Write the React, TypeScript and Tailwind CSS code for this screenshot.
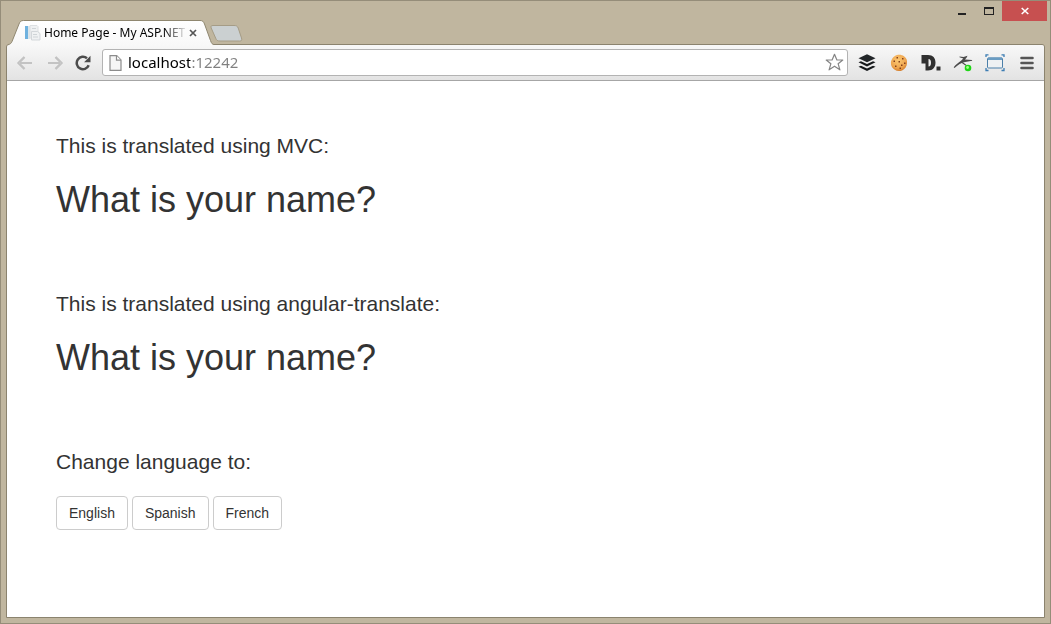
import type { ReactNode } from "react";

function ToolButton({ label, children }: { label: string; children: ReactNode }) {
  return (
    <button type="button" aria-label={label} className="flex h-6 w-8 shrink-0 items-center justify-center">
      {children}
    </button>
  );
}

function PageIcon() {
  return (
    <svg width="16" height="16" viewBox="0 0 16 16" className="shrink-0" aria-hidden="true">
      <rect x="0" y="1" width="3" height="13" fill="#6fb2df" />
      <rect x="3" y="1" width="2" height="13" fill="#dbe6ec" />
      <path d="M5 .5h7l1 1V13H5z" fill="#eff1f2" stroke="#dde0e2" />
      <path d="M6.500 6.500h6l2.500 2v6.500h-8.500z" fill="#f0f2f3" stroke="#d3d7da" />
      <path d="M7 3.500h4M8 9.500h4M8 12h5" stroke="#cfd4d7" />
    </svg>
  );
}

function Tab() {
  return (
    <div className="relative z-10 -mb-px ml-[2px] flex h-[25px] w-[206px] items-center pl-[17px]">
      <svg width="206" height="25" viewBox="0 0 206 25" className="absolute inset-0" aria-hidden="true">
        <defs>
          <linearGradient id="tabFill" x1="0" y1="0" x2="0" y2="1">
            <stop offset="0" stopColor="#ffffff" />
            <stop offset="1" stopColor="#f8f8f8" />
          </linearGradient>
        </defs>
        <path
          d="M0 25V24.500C2 24.500 3 23.500 4 21.500L11 4C12 1.500 13 .5 15.500 .5H192C194.500 .5 195.500 1.500 196.500 4L202.500 20.500C203.500 23.500 204.500 24.500 206 24.500V25z"
          fill="url(#tabFill)"
        />
        <path
          d="M0 24.500C2 24.500 3 23.500 4 21.500L11 4C12 1.500 13 .5 15.500 .5H192C194.500 .5 195.500 1.500 196.500 4L202.500 20.500C203.500 23.500 204.500 24.500 206 24.500"
          fill="none"
          stroke="#8f8770"
        />
      </svg>
      <div className="relative flex items-center">
        <PageIcon />
        <span className="ml-[3px] w-[142px] whitespace-nowrap font-['Noto_Sans','Open_Sans',sans-serif] text-[12px] leading-4 text-black [mask-image:linear-gradient(to_right,black_120px,transparent_144px)]">
          Home Page - My ASP.NET
        </span>
        <button type="button" aria-label="Close tab" className="ml-[2px] flex h-4 w-[10px] items-center justify-center">
          <svg width="8" height="8" viewBox="0 0 8 8" aria-hidden="true">
            <path d="M1 1l6 6M7 1L1 7" stroke="#555" strokeWidth="1.700" />
          </svg>
        </button>
      </div>
    </div>
  );
}

function TitleBar() {
  return (
    <header className="flex h-[43px] items-end justify-between pl-[5px]">
      <div className="flex items-end">
        <Tab />
        <button type="button" aria-label="New tab" className="mb-[2px] -ml-[4px]">
          <svg width="33" height="17" viewBox="0 0 33 17" aria-hidden="true">
            <path
              d="M3 .5H24C26.500 .5 27.500 1.200 28.200 3L31.500 13C32.200 15.300 31.500 16 29.500 16H10C7.500 16 6.500 15.300 5.700 13.200L1.200 3C.6 1.300 1 .5 3 .5z"
              fill="#cbd0d1"
              stroke="#a59c86"
            />
          </svg>
        </button>
      </div>
      <div className="mr-[3px] flex self-start">
        <button type="button" aria-label="Minimize" className="flex h-5 w-[27px] items-center justify-center">
          <svg width="10" height="10" viewBox="0 0 10 10" aria-hidden="true">
            <path d="M1 7h8v2H1z" fill="#222" />
          </svg>
        </button>
        <button type="button" aria-label="Maximize" className="flex h-5 w-[27px] items-center justify-center">
          <svg width="10" height="8" viewBox="0 0 10 8" aria-hidden="true">
            <path d="M0 0h10v8H0zM1 2v5h8V2z" fill="#222" fillRule="evenodd" />
          </svg>
        </button>
        <button type="button" aria-label="Close" className="flex h-5 w-[45px] items-center justify-center bg-[#c75050]">
          <svg width="8" height="8" viewBox="0 0 8 8" aria-hidden="true">
            <path d="M.7 1l6.600 6M7.300 1L.7 7" stroke="#fff" strokeWidth="1.600" />
          </svg>
        </button>
      </div>
    </header>
  );
}

function ArrowIcon({ flip }: { flip?: boolean }) {
  return (
    <svg width="16" height="14" viewBox="0 0 16 14" className={flip ? "-scale-x-100" : ""} aria-hidden="true">
      <path d="M7.500 1L1.500 7l6 6M2 7H15" fill="none" stroke="#b8b8b8" strokeWidth="2.200" />
      <path d="M7.500 1L1.500 7l6 6M2 7H15" fill="none" stroke="#cecece" strokeWidth="1" />
    </svg>
  );
}

function Toolbar() {
  return (
    <div className="flex items-center rounded-t-[2px] border-b border-[#a6a6a6] bg-linear-to-b from-[#f8f8f8] to-[#e3e3e3] py-1 pr-px pl-[3px]">
      <button type="button" aria-label="Back" className="flex h-6 w-[30px] shrink-0 items-center justify-center">
        <ArrowIcon />
      </button>
      <button type="button" aria-label="Forward" className="flex h-6 w-[30px] shrink-0 items-center justify-center">
        <ArrowIcon flip />
      </button>
      <button type="button" aria-label="Reload" className="flex h-6 w-[26px] shrink-0 items-center justify-center">
        <svg width="16" height="16" viewBox="0 0 16 16" aria-hidden="true">
          <path d="M13.700 10.300A6.200 6.200 0 1 1 12 3.300" fill="none" stroke="#4c4c4c" strokeWidth="2.500" />
          <path d="M15.500 .8V7.200H9.100z" fill="#4c4c4c" />
        </svg>
      </button>
      <div className="ml-[6px] flex h-[27px] min-w-0 flex-1 items-center rounded-[3px] border border-[#b3b3b3] bg-white pr-[3px] pl-[6px]">
        <svg width="13" height="16" viewBox="0 0 13 16" className="shrink-0" aria-hidden="true">
          <path d="M1 .7h6.700L12 5v10.300H1z" fill="#f6f6f6" stroke="#8c8c8c" strokeWidth="1.200" />
          <path d="M7.500 .7V5.200H12" fill="#fff" stroke="#8c8c8c" strokeWidth="1.200" />
        </svg>
        <input
          type="text"
          aria-label="Address"
          defaultValue="localhost:12242"
          className="ml-[6px] h-6 min-w-0 flex-1 bg-[linear-gradient(to_right,#000_62px,#808080_62px)] bg-clip-text pb-[2px] font-['Noto_Sans','Open_Sans',sans-serif] text-[15px] text-transparent caret-black outline-none"
        />
        <button type="button" aria-label="Bookmark this page" className="shrink-0">
          <svg width="19" height="19" viewBox="0 0 19 19" aria-hidden="true">
            <path
              d="M9.500 1.300L11.900 7h5.900l-4.700 3.700 1.800 6.100-5.400-3.600-5.400 3.600 1.800-6.100L1.200 7h5.900z"
              fill="#fff"
              stroke="#858585"
              strokeWidth="1.200"
              strokeLinejoin="round"
            />
          </svg>
        </button>
      </div>
      <div className="ml-[3px] flex">
        <ToolButton label="Buffer">
          <svg width="18" height="18" viewBox="0 0 18 18" aria-hidden="true">
            <path d="M9 .3L17.500 4.300 9 8.300 .5 4.300z" fill="#222629" />
            <path d="M.5 8.300L3 7.200 9 10 15 7.200 17.500 8.300 9 12.400z" fill="#16191b" />
            <path d="M.5 12.800L3 11.700 9 14.500 15 11.700 17.500 12.800 9 17z" fill="#16191b" />
          </svg>
        </ToolButton>
        <ToolButton label="Cookies">
          <svg width="18" height="18" viewBox="0 0 18 18" aria-hidden="true">
            <defs>
              <radialGradient id="cookie" cx=".45" cy=".35" r=".65">
                <stop offset="0" stopColor="#fbc873" />
                <stop offset=".7" stopColor="#efa64f" />
                <stop offset="1" stopColor="#d5802f" />
              </radialGradient>
            </defs>
            <path
              d="M7 1C9 .4 12 .6 14 2.300 16.500 4 17.300 6.500 17 9.500c-.2 3-2 5.300-4.500 6.700-2.500 1.200-5.500 1.200-7.700-.4C2.500 14.300 .8 12 .9 9 1 5.500 3.500 2 7 1z"
              fill="url(#cookie)"
            />
            <path
              d="M6.500 3H8v1.500H6.500zM12 4h1.500v1.500H12zM3.500 6.500H5V8H3.500zM8.500 7H10v1.500H8.500zM14 8.500h1.500V10H14zM5 11.500h1.500V13H5zM9.500 13.500H11V15H9.500zM11 10.500h1.500V12H11z"
              fill="#84401c"
            />
          </svg>
        </ToolButton>
        <ToolButton label="Disconnect">
          <svg width="20" height="18" viewBox="0 0 20 18" aria-hidden="true">
            <path
              d="M.5 1H7C12 1 14.500 4 14.500 8.500S12 16.500 7 16.500H4.500V9.500H.5zM7.500 5V12.500C9.300 12.300 10 11 10 8.700S9.300 5.200 7.500 5z"
              fill="#303030"
              fillRule="evenodd"
            />
            <path d="M15.500 12.500h4v4h-4z" fill="#303030" />
          </svg>
        </ToolButton>
        <ToolButton label="Tracker">
          <svg width="20" height="18" viewBox="0 0 20 18" aria-hidden="true">
            <path
              d="M6.500 2.500L10.500 3 14.500 1.800 13.500 3.800 12 5.600 19 5.900l.2 .8-8.200 1.500C8 8.800 5.500 10.500 1.500 14L.7 13.200C3 10.700 5.200 8.600 8 6.800L10.300 4.500 6.500 3.300z"
              fill="#4b4b4b"
            />
            <path d="M9.500 8l4 3-.8 .8L8.500 8.800z" fill="#4b4b4b" />
            <circle cx="15" cy="14" r="3.300" fill="#1fd516" />
            <circle cx="14.600" cy="13.500" r="1.400" fill="#a4ff86" />
          </svg>
        </ToolButton>
        <ToolButton label="Resize window">
          <svg width="20" height="18" viewBox="0 0 20 18" aria-hidden="true">
            <path d="M1 3V.8h2.500M16.500 .8H19V3M19 14v2.500h-2.500M3.500 16.500H1V14" fill="none" stroke="#3d7db3" strokeWidth="1.300" />
            <rect x="2.500" y="4" width="15" height="10" rx="1" fill="#eef1f3" stroke="#4b7fa9" strokeWidth="1" />
            <rect x="3" y="3.500" width="14" height="2.500" fill="#6a9cc2" />
          </svg>
        </ToolButton>
        <ToolButton label="Menu">
          <svg width="14" height="14" viewBox="0 0 14 14" aria-hidden="true">
            <path d="M1.500 2h11M1.500 7h11M1.500 12h11" stroke="#555" strokeWidth="2.600" strokeLinecap="round" />
          </svg>
        </ToolButton>
      </div>
    </div>
  );
}

function Translation({ source }: { source: string }) {
  return (
    <section className="mb-[69px]">
      <p className="text-[21px] leading-[30px]">This is translated using {source}:</p>
      <h1 className="mt-[19px] text-[36px] leading-10">What is your name?</h1>
    </section>
  );
}

const languages = ["English", "Spanish", "French"];

export default function App() {
  return (
    <div className="flex min-h-screen flex-col border border-[#958d79] bg-[#c0b69f] font-['Liberation_Sans',Arial,sans-serif]">
      <TitleBar />
      <div className="mx-[5px] mb-[5px] flex flex-1 flex-col rounded-t-[3px] border border-[#8b836e]">
        <Toolbar />
        <main className="flex-1 bg-white px-[49px] pt-[50px] pb-10 text-[#333]">
          <Translation source="MVC" />
          <Translation source="angular-translate" />
          <p className="text-[21px] leading-[30px]">Change language to:</p>
          <div className="mt-[19px] flex gap-1">
            {languages.map((language) => (
              <button
                key={language}
                type="button"
                className="rounded-[4px] border border-[#ccc] bg-white px-3 py-[6px] text-[14px] leading-5"
              >
                {language}
              </button>
            ))}
          </div>
        </main>
      </div>
    </div>
  );
}
